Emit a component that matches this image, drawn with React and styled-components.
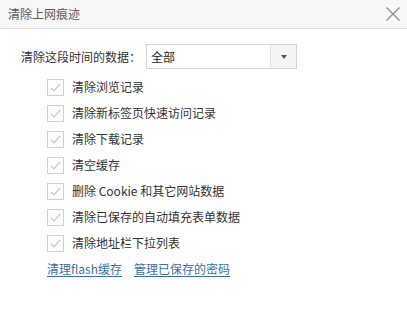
import React from "react";
import styled, { createGlobalStyle } from "styled-components";

const Global = createGlobalStyle`
  html, body { margin: 0; padding: 0; background: #fff; }
  body { font-family: "Microsoft YaHei", "Noto Sans CJK SC", "Noto Sans", sans-serif; font-size: 12px; color: #333; }
`;

const Dialog = styled.div`
  width: 407px;
  height: 309px;
  background: #fff;
  overflow: hidden;
`;

const TitleBar = styled.div`
  height: 29px;
  box-sizing: border-box;
  border-bottom: 1px solid #dcdcdc;
  background: #f7f7f7;
  display: flex;
  align-items: center;
  justify-content: space-between;
  padding: 0 7px 1px 8px;
`;

const Title = styled.div`
  font-size: 12px;
  line-height: 14px;
  color: #5a5a5a;
`;

const CloseButton = styled.div`
  width: 14px;
  height: 14px;
  display: flex;
  align-items: center;
  justify-content: center;
  margin-top: 1px;
`;

const Content = styled.div`
  padding: 15px 0 0 21px;
  display: flex;
  flex-direction: column;
`;

const RangeRow = styled.div`
  display: flex;
  align-items: center;
  height: 25px;
`;

const Label = styled.span`
  font-size: 12px;
  line-height: 14px;
  color: #333;
  width: 125px;
  white-space: nowrap;
`;

const Select = styled.div`
  width: 151px;
  height: 25px;
  box-sizing: border-box;
  border: 1px solid #d4d4d4;
  display: flex;
  align-items: stretch;
  background: #fff;
`;

const SelectValue = styled.div`
  flex: 1;
  padding-left: 4px;
  display: flex;
  align-items: center;
  font-size: 12px;
  color: #222;
`;

const SelectArrow = styled.div`
  width: 25px;
  border-left: 1px solid #e2e2e2;
  background: #f4f4f4;
  display: flex;
  align-items: center;
  justify-content: center;
  &::after {
    content: "";
    width: 0;
    height: 0;
    border-left: 3px solid transparent;
    border-right: 3px solid transparent;
    border-top: 4px solid #555;
    margin-left: 1px;
  }
`;

const List = styled.div`
  display: flex;
  flex-direction: column;
  padding-left: 26px;
  margin-top: 5px;
`;

const Row = styled.label`
  display: flex;
  align-items: center;
  height: 26px;
  gap: 8px;
`;

const Box = styled.span`
  width: 17px;
  height: 17px;
  box-sizing: border-box;
  border: 1px solid #d0d0d0;
  background: #fff;
  display: flex;
  align-items: center;
  justify-content: center;
  margin-top: 1px;
`;

const ItemText = styled.span`
  font-size: 12px;
  line-height: 14px;
  color: #333;
  white-space: nowrap;
`;

const Links = styled.div`
  display: flex;
  align-items: center;
  height: 26px;
  gap: 12px;
`;

const Link = styled.a`
  font-size: 12px;
  line-height: 14px;
  color: #3b6fa8;
  text-decoration: underline;
  text-underline-offset: 2px;
  cursor: pointer;
`;

const items = [
  "清除浏览记录",
  "清除新标签页快速访问记录",
  "清除下载记录",
  "清空缓存",
  "删除 Cookie 和其它网站数据",
  "清除已保存的自动填充表单数据",
  "清除地址栏下拉列表",
];

const Check = () => (
  <svg width="13" height="13" viewBox="0 0 13 13">
    <path d="M2 6.8 L5 9.8 L11 3.2" fill="none" stroke="#a6c2dc" strokeWidth="1.1" />
  </svg>
);

export default function App() {
  return (
    <>
      <Global />
      <Dialog>
        <TitleBar>
          <Title>清除上网痕迹</Title>
          <CloseButton>
            <svg width="14" height="14" viewBox="0 0 14 14">
              <path d="M0.5 0.5 L13.5 13.5 M13.5 0.5 L0.5 13.5" stroke="#8a8a8a" strokeWidth="1.1" />
            </svg>
          </CloseButton>
        </TitleBar>
        <Content>
          <RangeRow>
            <Label>清除这段时间的数据：</Label>
            <Select>
              <SelectValue>全部</SelectValue>
              <SelectArrow />
            </Select>
          </RangeRow>
          <List>
            {items.map((t) => (
              <Row key={t}>
                <Box>
                  <Check />
                </Box>
                <ItemText>{t}</ItemText>
              </Row>
            ))}
            <Links>
              <Link>清理flash缓存</Link>
              <Link>管理已保存的密码</Link>
            </Links>
          </List>
        </Content>
      </Dialog>
    </>
  );
}
